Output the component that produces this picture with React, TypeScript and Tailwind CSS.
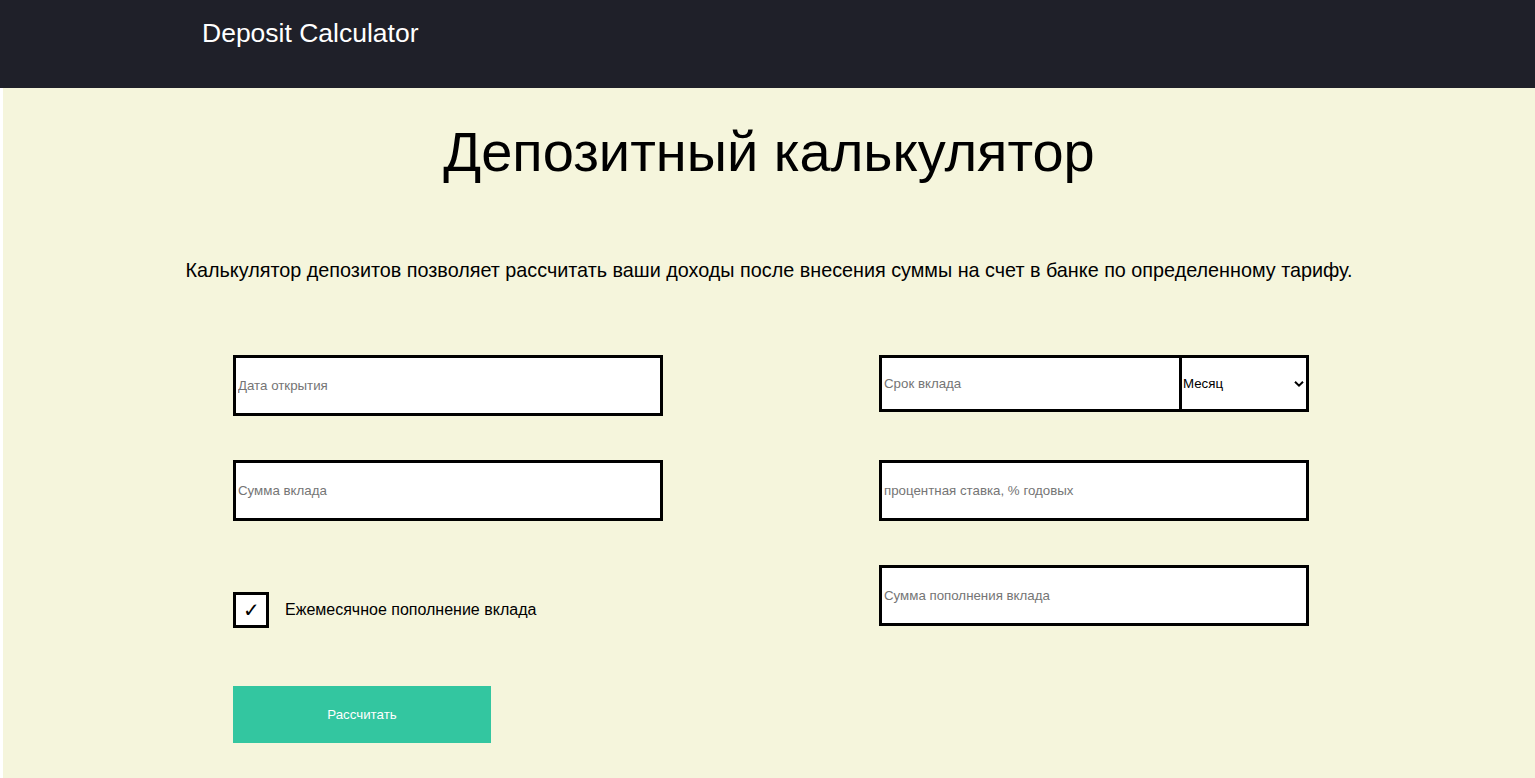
import React, { useState } from 'react';

const fieldCls =
  "h-[61px] w-full border-[3px] border-black bg-white px-[2px] text-[13.3px] text-black placeholder:text-[#757575] outline-none";

export default function App() {
  const [monthly, setMonthly] = useState(true);

  return (
    <div className="min-h-[778px] bg-white font-['Liberation_Sans',Arial,sans-serif] text-black">
      {/* шапка */}
      <header className="h-[88px] bg-[#1f2029] pl-[202px] pt-[18px]">
        <span className="text-[26.5px] leading-[30px] text-white">Deposit Calculator</span>
      </header>

      <main className="ml-[3px] min-h-[690px] bg-[#f5f5dc] pt-[32px]">
        <h1 className="text-center text-[56px] leading-[64px]">Депозитный калькулятор</h1>
        <p className="mt-[75px] text-center text-[19.8px] leading-[23px]">
          Калькулятор депозитов позволяет рассчитать ваши доходы после внесения суммы на счет в банке по определенному тарифу.
        </p>

        <form
          className="ml-[230px] mt-[73px] flex w-[1076px] justify-between"
          onSubmit={(e) => e.preventDefault()}
        >
          {/* левая колонка */}
          <div className="flex w-[430px] flex-col">
            <input className={fieldCls} placeholder="Дата открытия" />
            <input className={`${fieldCls} mt-[44px]`} placeholder="Сумма вклада" />

            <label className="mt-[71px] flex items-center gap-[16px] text-[16px]">
              <button
                type="button"
                onClick={() => setMonthly(!monthly)}
                className="flex h-[36px] w-[36px] items-center justify-center border-[3px] border-black bg-white text-[20px] leading-none"
              >
                {monthly ? "✓" : ""}
              </button>
              Ежемесячное пополнение вклада
            </label>

            <button
              type="submit"
              className="mt-[58px] h-[57px] w-[258px] bg-[#33c6a0] text-[13.3px] text-white"
            >
              Рассчитать
            </button>
          </div>

          {/* правая колонка */}
          <div className="flex w-[430px] flex-col">
            <div className="flex h-[57px]">
              <input
                className="h-full w-[303px] border-[3px] border-black bg-white px-[2px] text-[13.3px] placeholder:text-[#757575] outline-none"
                placeholder="Срок вклада"
              />
              <div className="relative h-full flex-1">
                <select className="h-full w-full appearance-none border-y-[3px] border-r-[3px] border-black bg-white pl-[1px] text-[13.3px] outline-none">
                  <option>Месяц</option>
                  <option>День</option>
                  <option>Год</option>
                </select>
                <svg
                  className="pointer-events-none absolute right-[5px] top-1/2 -translate-y-1/2"
                  width="10"
                  height="7"
                  viewBox="0 0 10 7"
                  fill="none"
                >
                  <path d="M1 1.2L5 5.2L9 1.2" stroke="black" strokeWidth="2" />
                </svg>
              </div>
            </div>
            <input className={`${fieldCls} mt-[48px]`} placeholder="процентная ставка, % годовых" />
            <input className={`${fieldCls} mt-[44px]`} placeholder="Сумма пополнения вклада" />
          </div>
        </form>
      </main>
    </div>
  );
}
